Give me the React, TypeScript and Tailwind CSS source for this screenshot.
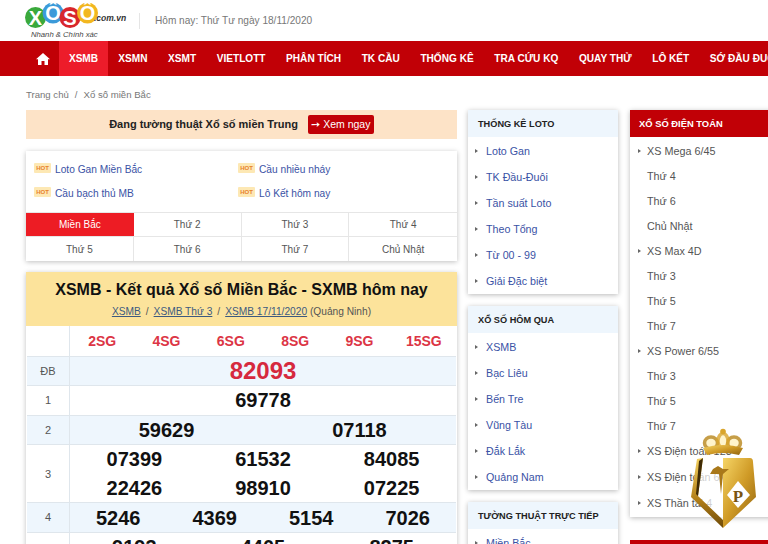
import React from "react";

const font = { fontFamily: '"Liberation Sans", Arial, sans-serif' };

const navItems = ["XSMN", "XSMT", "VIETLOTT", "PHÂN TÍCH", "TK CẦU", "THỐNG KÊ", "TRA CỨU KQ", "QUAY THỬ", "LÔ KẾT", "SỚ ĐẦU ĐUÔI"];

function Logo() {
  const circles = [
    { cx: 35.5, cy: 17.5, r: 10.5, fill: "#3aa93c", t: "X" },
    { cx: 53, cy: 13, r: 10.5, fill: "#3b9ad9", t: "Ô" },
    { cx: 70, cy: 17.5, r: 10.5, fill: "#d8262c", t: "S" },
    { cx: 87.5, cy: 13, r: 10.5, fill: "#f2b71f", t: "Ô" },
  ];
  return (
    <svg width="100" height="30" viewBox="0 0 100 30" className="block">
      {circles.map((c, i) => (
        <g key={i}>
          <circle cx={c.cx} cy={c.cy} r={c.r} fill={c.fill} />
          <text x={c.cx} y={c.cy + 7} textAnchor="middle" fontSize="20" fontWeight="700" fill="#fff" fontFamily="Liberation Sans">
            {c.t}
          </text>
        </g>
      ))}
    </svg>
  );
}

function Emblem() {
  return (
    <svg width="66" height="102" viewBox="0 0 66 102" className="absolute left-[690px] top-[428px]">
      <defs>
        <linearGradient id="gold" x1="0" y1="0" x2="1" y2="1">
          <stop offset="0" stopColor="#f6d566" />
          <stop offset="0.5" stopColor="#cf9a26" />
          <stop offset="1" stopColor="#8f620f" />
        </linearGradient>
        <linearGradient id="gold2" x1="0" y1="0" x2="0" y2="1">
          <stop offset="0" stopColor="#f3d060" />
          <stop offset="0.6" stopColor="#b17e18" />
          <stop offset="1" stopColor="#6e4a08" />
        </linearGradient>
      </defs>
      <path d="M13 30 L33 30 L33 92 L8 68 Z" fill="#ffffff" opacity="0.72" />
      <ellipse cx="21" cy="15" rx="6.5" ry="6" fill="#fff2c0" opacity="0.8" stroke="#b8861b" strokeWidth="3.5" />
      <ellipse cx="44" cy="15" rx="6.5" ry="6" fill="#fff2c0" opacity="0.8" stroke="#b8861b" strokeWidth="3.5" />
      <ellipse cx="33" cy="13" rx="5" ry="7.5" fill="#fff2c0" opacity="0.8" stroke="#d9a52c" strokeWidth="3.5" />
      <circle cx="33" cy="3.5" r="2.8" fill="#d9a52c" />
      <path d="M13 20 Q33 14 53 20 L49 27 Q33 23 17 27 Z" fill="url(#gold)" />
      <path d="M7 31 L13 30 L8 68 L33 92 L33 100 L1 69 Z" fill="url(#gold2)" />
      <path d="M9 33 L13 30 L8 68 L6 66 Z" fill="#3f2b06" />
      <path d="M33 30 L60 30 Q63 30 63 34 L66 69 L33 100 Z" fill="url(#gold)" />
      <path d="M28 38 L33 41 L39 41 L33 46 L31 66 L29 46 L20 46 L23 41 Z" fill="#a9781a" />
      <path d="M48 53 L60 67 L48 80 L37 67 Z" fill="#fff" />
      <text x="48" y="74" textAnchor="middle" fontSize="17" fontWeight="700" fill="#7a5410" fontFamily="Liberation Serif">
        P
      </text>
    </svg>
  );
}

function SideCard({ title, items, className = "" }: { title: string; items: string[]; className?: string }) {
  return (
    <div className={`bg-white shadow-[0_1px_5px_rgba(0,0,0,0.28)] ${className}`}>
      <div className="h-[27px] bg-[#eef6fd] pl-[10px] pt-px text-[9.2px] leading-[27px] font-bold text-[#222]">{title}</div>
      <ul className="pt-px">
        {items.map((t) => (
          <li key={t} className="flex h-[26px] items-center text-[10.7px] text-[#3a52a5]">
            <span className="ml-[7px] mr-[8px] h-0 w-0 border-y-[2.5px] border-l-[3px] border-y-transparent border-l-[#666]" />
            {t}
          </li>
        ))}
      </ul>
    </div>
  );
}

function Prize({ label, alt, tall, rows }: { label: string; alt?: boolean; tall?: boolean; rows: { values: string[] }[] }) {
  return (
    <div className={`flex border-t border-[#dfe6ec] ${alt ? "bg-[#eef6fd]" : "bg-white"} ${tall ? "min-h-[58px]" : ""}`}>
      <div className="flex w-[43px] shrink-0 items-center justify-center border-r border-[#dfe6ec] text-[11px] text-[#555]">{label}</div>
      <div className="flex-1">
        {rows.map((r, i) => (
          <div key={i} className="flex h-[28.6px] items-center text-[20px] font-bold text-[#111]">
            {r.values.map((v) => (
              <div key={v} className="flex-1 text-center">
                {v}
              </div>
            ))}
          </div>
        ))}
      </div>
    </div>
  );
}

export default function App() {
  const hot = ["Loto Gan Miền Bắc", "Cầu nhiều nháy", "Cầu bạch thủ MB", "Lô Kết hôm nay"];
  const days = ["Miền Bắc", "Thứ 2", "Thứ 3", "Thứ 4", "Thứ 5", "Thứ 6", "Thứ 7", "Chủ Nhật"];
  const right: [string, boolean][] = [
    ["XS Mega 6/45", true],
    ["Thứ 4", false],
    ["Thứ 6", false],
    ["Chủ Nhật", false],
    ["XS Max 4D", true],
    ["Thứ 3", false],
    ["Thứ 5", false],
    ["Thứ 7", false],
    ["XS Power 6/55", true],
    ["Thứ 3", false],
    ["Thứ 5", false],
    ["Thứ 7", false],
    ["XS Điện toán 123", true],
    ["XS Điện toán 6x36", true],
    ["XS Thần tài 4", true],
  ];
  return (
    <div style={font} className="relative h-[544px] w-[768px] overflow-hidden bg-white">
      <header className="flex h-[41px] items-center">
        <div className="relative h-[41px] w-[139px]">
          <Logo />
          <span className="absolute left-[94px] top-[12px] text-[8.5px] font-bold italic text-[#333]">.com.vn</span>
          <span className="absolute left-[31px] top-[29px] text-[7.7px] italic text-[#444]">Nhanh &amp; Chính xác</span>
        </div>
        <div className="h-[16px] border-l border-[#e5e5e5]" />
        <span className="ml-[15px] text-[10.1px] text-[#777]">Hôm nay: Thứ Tư ngày 18/11/2020</span>
      </header>

      <nav className="flex h-[35px] items-center overflow-hidden whitespace-nowrap bg-[#c10006] pl-[36px] text-[10.1px] font-bold text-white">
        <svg width="14" height="12" viewBox="0 0 14 12" className="mr-[9px] shrink-0" fill="#fff">
          <path d="M7 0 L14 6.3 L12 6.3 L12 12 L8.5 12 L8.5 8 L5.5 8 L5.5 12 L2 12 L2 6.3 L0 6.3 Z" />
        </svg>
        <a className="flex h-full w-[49px] shrink-0 items-center justify-center bg-[#ed1c2a]">XSMB</a>
        {navItems.map((n) => (
          <a key={n} className="shrink-0 px-[10.3px]">
            {n}
          </a>
        ))}
      </nav>

      <div className="flex h-[34px] items-center pl-[26px] pt-[4px] text-[9.6px] text-[#777]">
        <span>Trang chủ</span>
        <span className="mx-[6px]">/</span>
        <span>Xổ số miền Bắc</span>
      </div>

      <main className="flex items-start pl-[26px]">
        <div className="w-[431px] shrink-0">
          <div className="flex h-[29px] items-center justify-center bg-[#fde3c7] text-[11px] font-bold text-[#222]">
            <span className="mr-[10px]">Đang tường thuật Xổ số miền Trung</span>
            <span className="flex h-[19px] w-[66px] items-center justify-center rounded-[2px] bg-[#c10006] text-[10.5px] font-normal text-white">➙ Xem ngay</span>
          </div>

          <div className="mt-[12px] bg-white shadow-[0_1px_5px_rgba(0,0,0,0.25)]">
            <div className="grid h-[61px] grid-cols-[204px_1fr] content-start gap-y-[8px] pl-[8px] pt-[11px]">
              {hot.map((h) => (
                <div key={h} className="flex h-[16px] items-center text-[10.2px] text-[#3a52a5]">
                  <span className="mr-[4px] -mt-[5px] w-[17px] rounded-[1px] bg-[#fde8b4] text-center text-[6px] leading-[10px] font-bold text-[#e8812a]">HOT</span>
                  {h}
                </div>
              ))}
            </div>
            <div className="grid grid-cols-4 border-t border-[#e6e6e6]">
              {days.map((d, i) => (
                <div
                  key={d}
                  className={`flex h-[24px] items-center justify-center text-[10px] ${i === 0 ? "bg-[#ed1c24] text-white" : "text-[#555]"} ${i % 4 !== 3 && i !== 0 ? "border-r border-[#e6e6e6]" : ""} ${i < 4 ? "border-b border-[#e6e6e6]" : ""}`}
                >
                  {d}
                </div>
              ))}
            </div>
          </div>

          <div className="mt-[11px] bg-white px-px shadow-[0_1px_5px_rgba(0,0,0,0.25)]">
            <div className="-mx-px flex h-[54px] flex-col items-center bg-[#fce39b]">
              <h1 className="mt-[6px] text-[16px] leading-[24px] font-bold text-[#111]">XSMB - Kết quả Xổ số Miền Bắc - SXMB hôm nay</h1>
              <p className="mt-[2px] text-[10.2px] text-[#555]">
                <span className="text-[#3d5a80] underline">XSMB</span>
                <span className="mx-[5px]">/</span>
                <span className="text-[#3d5a80] underline">XSMB Thứ 3</span>
                <span className="mx-[5px]">/</span>
                <span className="text-[#3d5a80] underline">XSMB 17/11/2020</span> (Quảng Ninh)
              </p>
            </div>
            <div className="flex h-[30px]">
              <div className="w-[43px] shrink-0 border-r border-[#dfe6ec]" />
              <div className="grid flex-1 grid-cols-6 items-center text-center text-[14px] font-bold text-[#dc3545]">
                {["2SG", "4SG", "6SG", "8SG", "9SG", "15SG"].map((s) => (
                  <span key={s}>{s}</span>
                ))}
              </div>
            </div>
            <div className="flex h-[29px] border-t border-[#dfe6ec] bg-[#eef6fd]">
              <div className="flex w-[43px] shrink-0 items-center justify-center border-r border-[#dfe6ec] text-[11px] text-[#555]">ĐB</div>
              <div className="flex flex-1 items-center justify-center text-[24px] font-bold text-[#d6293e]">82093</div>
            </div>
            <Prize label="1" rows={[{ values: ["69778"] }]} />
            <Prize label="2" alt rows={[{ values: ["59629", "07118"] }]} />
            <Prize label="3" rows={[{ values: ["07399", "61532", "84085"] }, { values: ["22426", "98910", "07225"] }]} />
            <Prize label="4" alt rows={[{ values: ["5246", "4369", "5154", "7026"] }]} />
            <Prize label="5" tall rows={[{ values: ["9193", "4405", "8275"] }]} />
          </div>
        </div>

        <div className="ml-[11px] w-[150px] shrink-0">
          <SideCard title="THỐNG KÊ LOTO" items={["Loto Gan", "TK Đầu-Đuôi", "Tần suất Loto", "Theo Tổng", "Từ 00 - 99", "Giải Đặc biệt"]} />
          <SideCard className="mt-[12px]" title="XỔ SỐ HÔM QUA" items={["XSMB", "Bạc Liêu", "Bến Tre", "Vũng Tàu", "Đắk Lắk", "Quảng Nam"]} />
          <SideCard className="mt-[12px]" title="TƯỜNG THUẬT TRỰC TIẾP" items={["Miền Bắc", "Miền Trung"]} />
        </div>

        <div className="ml-[12px] w-[150px] shrink-0">
          <div className="bg-white shadow-[0_1px_5px_rgba(0,0,0,0.28)]">
            <div className="h-[27px] bg-[#c10006] pl-[9px] text-[9.4px] leading-[28px] font-bold text-white">XỔ SỐ ĐIỆN TOÁN</div>
            <ul className="pt-px pb-px">
              {right.map(([t, arrow], i) => (
                <li key={i} className={`flex items-center whitespace-nowrap pl-[17px] text-[10.8px] text-[#555] ${arrow ? "h-[26px]" : "h-[24.7px]"}`}>
                  {arrow && <span className="absolute -ml-[9px] h-0 w-0 border-y-[2.5px] border-l-[3px] border-y-transparent border-l-[#666]" />}
                  {t}
                </li>
              ))}
            </ul>
          </div>
          <div className="mt-[23px] h-[27px] bg-[#c10006]" />
        </div>
      </main>

      <Emblem />
    </div>
  );
}
